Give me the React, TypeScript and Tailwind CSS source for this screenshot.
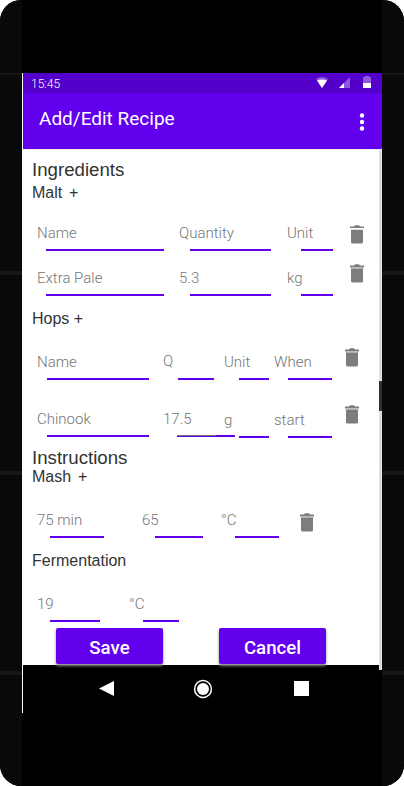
import type { ReactNode } from "react";

type FieldProps = { cell: string; line: string; children: ReactNode };

function Field({ cell, line, children }: FieldProps) {
  return (
    <div className={`shrink-0 font-[Roboto,sans-serif] text-[15px] font-light leading-5 text-[#757575] ${cell}`}>
      <div className="h-5 whitespace-pre">{children}</div>
      <div className={`mt-1.5 h-0.5 bg-[#6200ee] ${line}`} />
    </div>
  );
}

function Trash({ className, stripe = true }: { className: string; stripe?: boolean }) {
  return (
    <svg viewBox="0 0 14 19" className={`h-[19px] w-3.5 shrink-0 ${className}`} fill="#7d7d7d" aria-label="Delete">
      <path d="M0 1.500h4L5 .3h4l1 1.200h4V3H0z" />
      {stripe && <path d="M0 3h14v.8l-1 1.200H1L0 3.800z" opacity=".5" />}
      <path d="M1 4.800h12v12.200q0 1.500-1.500 1.500h-9Q1 18.500 1 17z" />
    </svg>
  );
}

function Row({ className, children }: { className: string; children: ReactNode }) {
  return <div className={`flex h-7 items-start pl-3.5 ${className}`}>{children}</div>;
}

function Title({ className, children }: { className: string; children: ReactNode }) {
  return <h2 className={`h-5 pl-[9px] text-[18.67px] leading-5 ${className}`}>{children}</h2>;
}

function Sub({ className, children }: { className: string; children: ReactNode }) {
  return <h3 className={`h-[18px] whitespace-pre pl-[9px] text-base leading-5 ${className}`}>{children}</h3>;
}

function Rail() {
  return (
    <div className="w-[22px] shrink-0 bg-[#090909]">
      <div className="mt-[73px] h-0.5 bg-[#161616]" />
      <div className="mt-[196px] h-1 bg-[#161616]" />
      <div className="mt-[196px] h-1 bg-[#161616]" />
      <div className="mt-[196px] h-1 bg-[#161616]" />
    </div>
  );
}

function StatusBar() {
  return (
    <div className="flex h-5 items-start bg-[#5300ca] pl-2 font-[Roboto,sans-serif] text-xs leading-[22px] text-white">
      <span className="font-light">15:45</span>
      <svg viewBox="0 0 58 20" className="ml-auto mr-2.5 h-5 w-[58px]" fill="#fff">
        <path opacity=".35" d="M2 6Q8 2 14 6L8 15z" />
        <path d="M3 7.500Q8 5.500 13 7.500L8 15z" />
        <path opacity=".35" d="M36 4v11H25z" />
        <path d="M30 10v5h-5z" />
        <path opacity=".35" d="M49 4h2V3h4v1h2v6h-8z" />
        <path d="M49 10h8v5h-8z" />
      </svg>
    </div>
  );
}

function AppBar() {
  return (
    <header className="flex h-14 bg-[#6200ee] pl-4 pr-[17px] text-white">
      <h1 className="mt-3 font-[Roboto,sans-serif] text-[19px] leading-7">Add/Edit Recipe</h1>
      <svg viewBox="0 0 6 18" className="ml-auto mt-5 h-[18px] w-1.5" fill="#fff">
        <circle cx="3" cy="2.500" r="2.200" />
        <circle cx="3" cy="9" r="2.200" />
        <circle cx="3" cy="15.500" r="2.200" />
      </svg>
    </header>
  );
}

function Button({ children }: { children: ReactNode }) {
  return (
    <button className="h-9 w-[107px] rounded-xs bg-[#6200ee] pt-[3px] text-center font-[Roboto,sans-serif] text-[18.67px] font-medium leading-8 text-white shadow-[0_2px_3px_0px_#888888]">
      {children}
    </button>
  );
}

export default function App() {
  return (
    <div className="flex h-[786px] w-[404px] overflow-hidden rounded-[21px] bg-black font-['Liberation_Sans',sans-serif]">
      <Rail />
      <div className="w-[360px] pt-[73px]">
        <div className="relative border-l border-white">
          <StatusBar />
          <AppBar />
          <main className="relative z-10 h-[516px] border-t border-[#ededed] bg-white pt-2.5 text-[#333]">
            <Title className="">Ingredients</Title>
            <Sub className="mt-[3px] [word-spacing:-1px]">{"Malt  +"}</Sub>
            <Row className="mt-[22px]">
              <Field cell="w-[142px]" line="ml-[9px] w-[118px]">Name</Field>
              <Field cell="w-[108px]" line="ml-[11px] w-[81px]">Quantity</Field>
              <Field cell="w-[63px]" line="ml-3.5 w-8">Unit</Field>
              <Trash className="mt-[1.5px]" stripe={false} />
            </Row>
            <Row className="mt-[17px]">
              <Field cell="w-[142px]" line="ml-[9px] w-[118px]">Extra Pale</Field>
              <Field cell="w-[108px]" line="ml-[11px] w-[81px]">5.3</Field>
              <Field cell="w-[63px]" line="ml-3.5 w-8">kg</Field>
              <Trash className="-mt-1" />
            </Row>
            <Sub className="mt-[13px]">Hops +</Sub>
            <Row className="mt-[25px]">
              <Field cell="w-[126px]" line="ml-2.5 w-[102px]">Name</Field>
              <Field cell="w-[61px]" line="ml-[15px] w-9"><span className="relative -top-px">Q</span></Field>
              <Field cell="w-[50px]" line="ml-[15px] w-[30px]">Unit</Field>
              <Field cell="w-[71px]" line="ml-3.5 w-11">When</Field>
              <Trash className="-mt-1" />
            </Row>
            <Row className="mt-[29px]">
              <Field cell="w-[126px]" line="ml-2.5 w-[102px]">Chinook</Field>
              <Field cell="w-[61px]" line="ml-3.5 w-[58px] bg-[linear-gradient(90deg,#777_39px,transparent_39px)] bg-[length:100%_1px] bg-no-repeat">17.5</Field>
              <Field cell="mt-px w-[50px]" line="ml-[15px] w-[30px]">g</Field>
              <Field cell="mt-px w-[71px]" line="ml-3.5 w-11">start</Field>
              <Trash className="-mt-1" />
            </Row>
            <Title className="mt-[11px]">Instructions</Title>
            <Sub className="-mt-px [word-spacing:-1px]">{"Mash  +"}</Sub>
            <Row className="mt-[25px]">
              <Field cell="w-[105px]" line="ml-[13px] w-[54px]">75 min</Field>
              <Field cell="w-[79px]" line="ml-[13px] w-12">65</Field>
              <Field cell="w-[79px]" line="ml-3.5 w-11">°C</Field>
              <Trash className="mt-[3px]" />
            </Row>
            <Sub className="mt-[13px]">Fermentation</Sub>
            <Row className="mt-[25px]">
              <Field cell="w-[92px]" line="ml-[13px] w-[50px]">19</Field>
              <Field cell="w-[80px]" line="ml-3.5 w-9">°C</Field>
            </Row>
            <div className="mt-1.5 flex gap-14 pl-[33px]">
              <Button>Save</Button>
              <Button>Cancel</Button>
            </div>
          </main>
          <nav className="h-12 bg-black">
            <svg viewBox="0 0 359 48" className="h-12 w-full" fill="#fff">
              <path d="M76 23.500L91 16v15z" />
              <circle cx="180" cy="24" r="8.400" fill="none" stroke="#fff" strokeWidth="1.500" />
              <circle cx="180" cy="24" r="6" />
              <path d="M271 16h15v15h-15z" />
            </svg>
          </nav>
          <div className="absolute right-0 top-[77px] z-20 h-[520px] w-[3px] bg-[linear-gradient(90deg,#e6e6e6_1px,#d4d4d4_1px,#d4d4d4_2px,#e6e6e6_2px)]">
            <div className="mt-[231px] h-[30px] w-[3px] bg-[#303030]" />
          </div>
        </div>
      </div>
      <Rail />
    </div>
  );
}
